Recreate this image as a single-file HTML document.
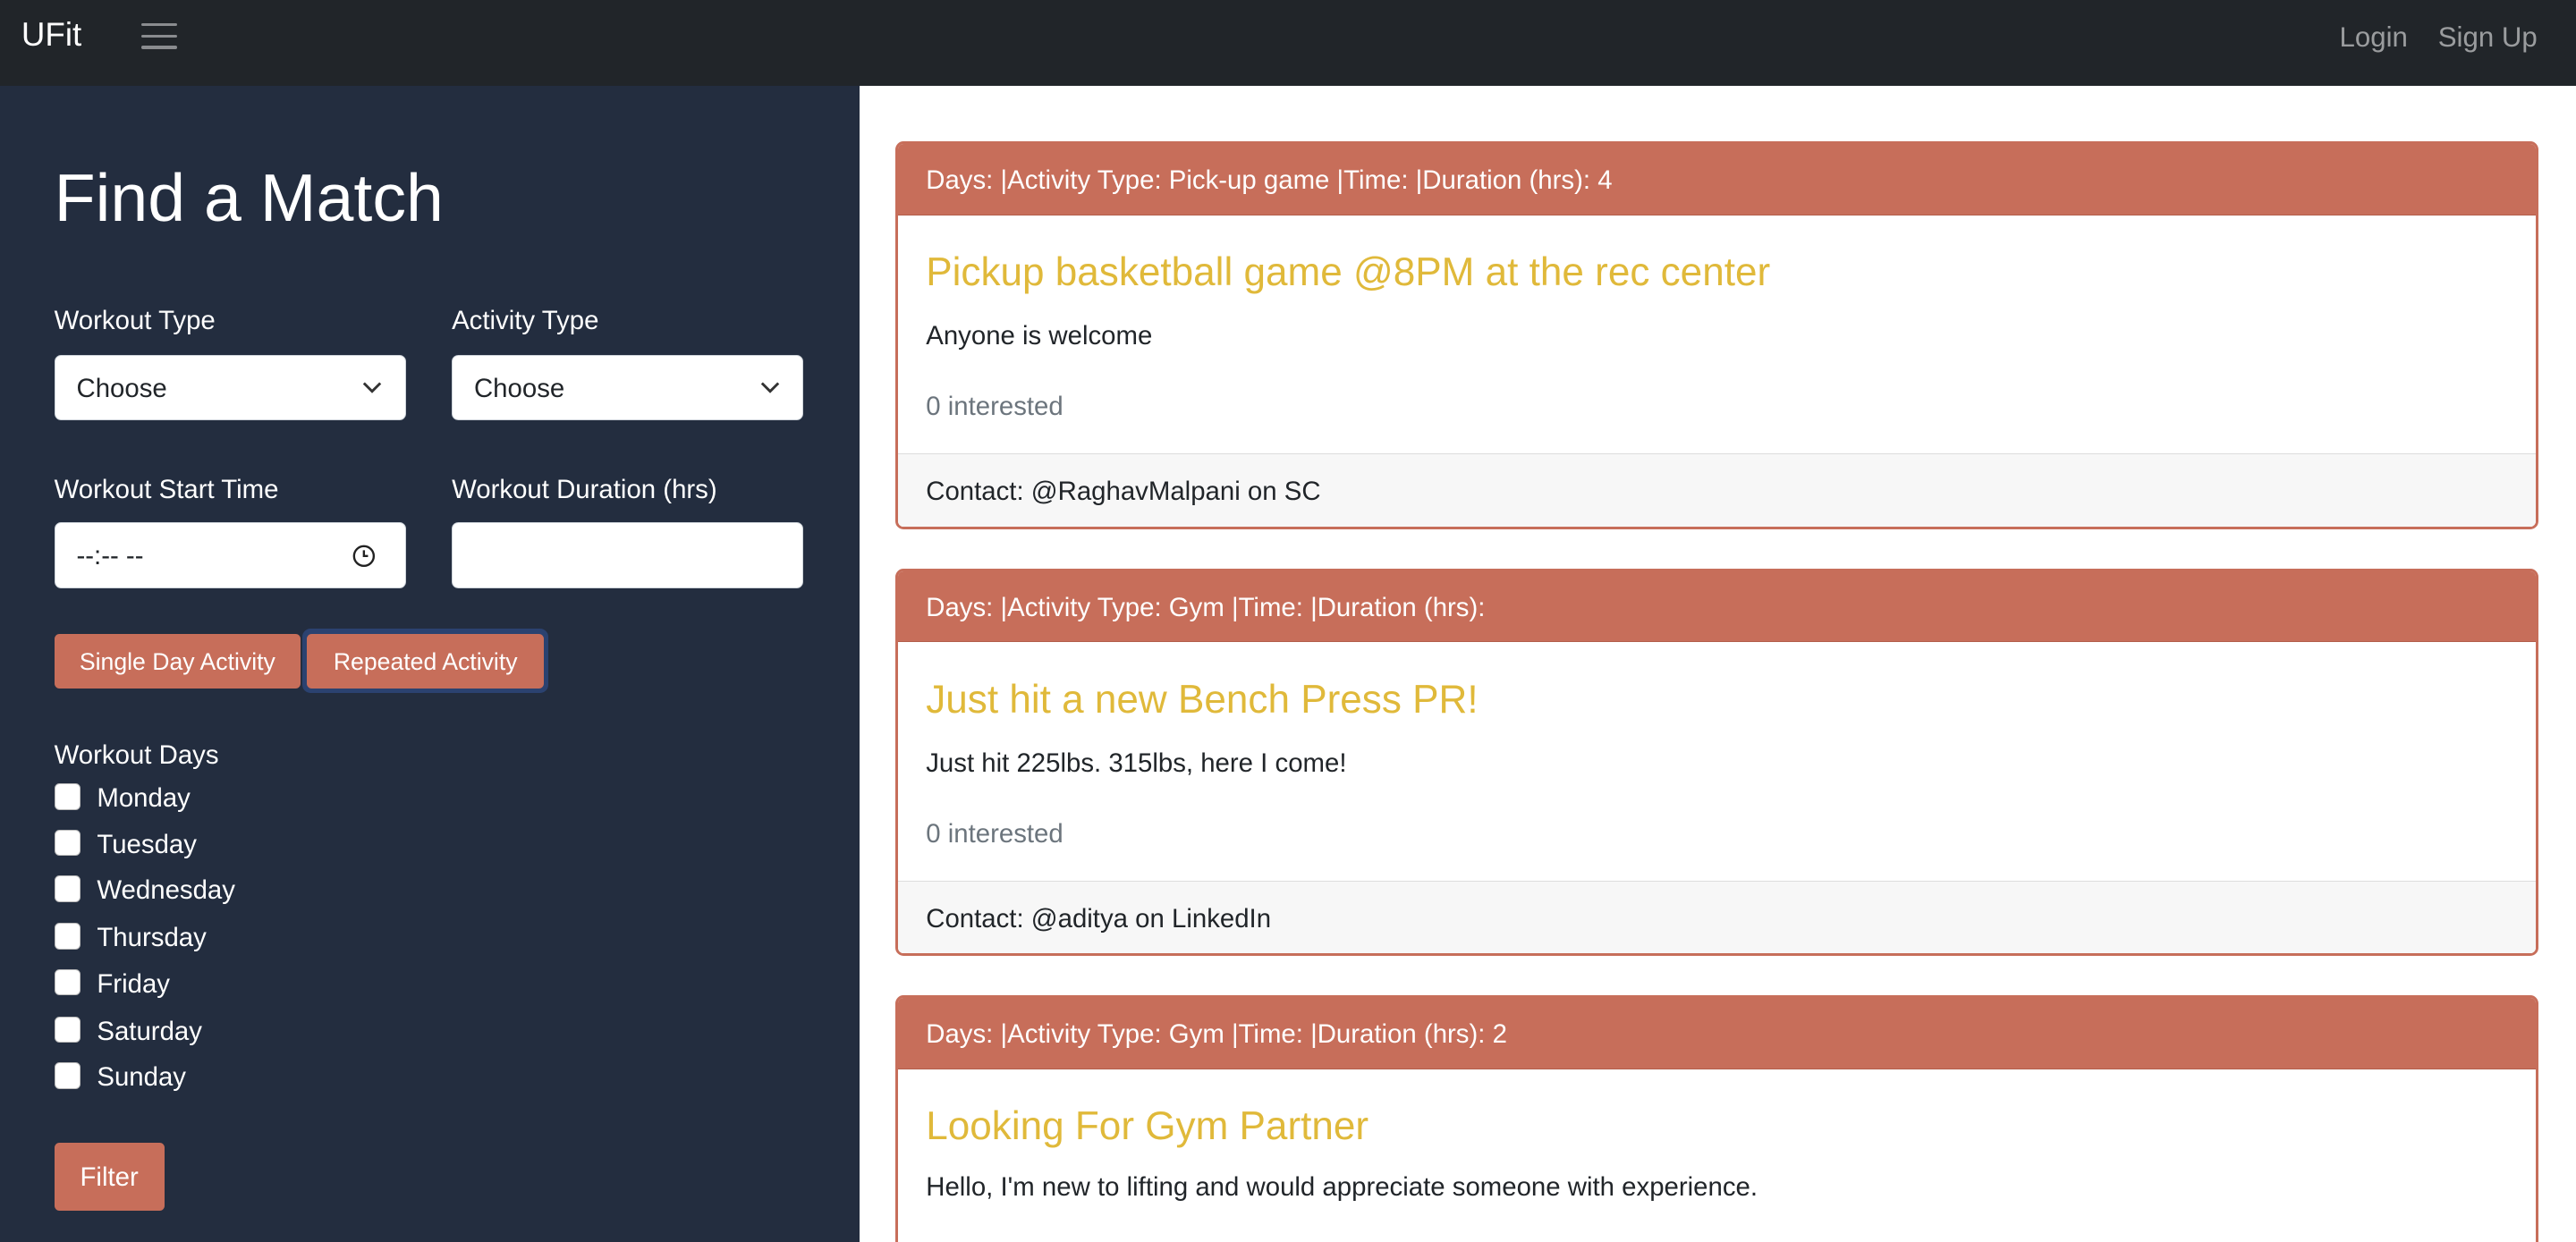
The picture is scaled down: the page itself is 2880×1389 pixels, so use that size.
<!DOCTYPE html>
<html><head><meta charset="utf-8">
<style>
html{zoom:1.83673;overflow:hidden;height:756px}
body{margin:0;width:1568px;height:756px;overflow:hidden;font-family:"Liberation Sans",sans-serif;background:#fff;position:relative}
.nav{position:absolute;left:0;top:0;width:1568px;height:52px;background:#212529}
.brand{position:absolute;left:13px;top:10px;color:#fff;font-size:20px}
.ham{position:absolute;left:86px;top:14px;width:22px}
.ham i{display:block;height:2px;background:#8a8c8f;margin-bottom:5px;border-radius:1px}
.nl{position:absolute;top:13px;color:rgba(255,255,255,.55);font-size:17px}
.side{position:absolute;left:0;top:52px;width:523px;height:704px;background:#232d3f;color:#fff}
.side h1{position:absolute;left:33px;top:45px;margin:0;font-weight:400;font-size:41px}
.lbl{position:absolute;font-size:16px}
.sel{position:absolute;width:213px;height:39px;background:#fff;border:1px solid #ced4da;border-radius:4px;color:#212529;font-size:16px;box-sizing:content-box}
.sel span{position:absolute;left:13px;top:11px}
.btn{position:absolute;background:#c76e5a;color:#fff;border-radius:3px;font-size:14.5px;text-align:center}
.cb{position:absolute;left:33px;width:15px;height:15px;background:#fff;border:1px solid #bbb;border-radius:3px}
.cl{position:absolute;left:59px;font-size:16px}
.card{position:absolute;left:545px;width:997px;border:2px solid #c76e5a;border-radius:5px;overflow:hidden;background:#fff}
.ch{background:#c76e5a;color:#fff;height:43px;font-size:16px;line-height:45px;padding-left:17px;border-bottom:1px solid #b35e4b}
.ct{position:absolute;left:17px;color:#e0b93a;font-size:24px}
.cx{position:absolute;left:17px;color:#212529;font-size:16px}
.ci{position:absolute;left:17px;color:#6c757d;font-size:16px}
.cf{position:absolute;left:0;right:0;bottom:0;height:44px;background:#f7f7f7;border-top:1px solid #ddd;font-size:16px;color:#212529;line-height:46px;padding-left:17px}
</style></head><body>
<div class="nav">
<div class="brand">UFit</div>
<div class="ham"><i></i><i></i><i></i></div>
<div class="nl" style="left:1424px">Login</div>
<div class="nl" style="left:1484px">Sign Up</div>
</div>
<div class="side">
<h1>Find a Match</h1>
<div class="lbl" style="left:33px;top:134px">Workout Type</div>
<div class="lbl" style="left:275px;top:134px">Activity Type</div>
<div class="sel" style="left:33px;top:164px"><span>Choose</span><svg style="position:absolute;right:14px;top:14px" width="12" height="10" viewBox="0 0 12 10"><path d="M1 3l5 5 5-5" fill="none" stroke="#333" stroke-width="1.6"/></svg></div>
<div class="sel" style="left:275px;top:164px"><span>Choose</span><svg style="position:absolute;right:14px;top:14px" width="12" height="10" viewBox="0 0 12 10"><path d="M1 3l5 5 5-5" fill="none" stroke="#333" stroke-width="1.6"/></svg></div>
<div class="lbl" style="left:33px;top:237px">Workout Start Time</div>
<div class="lbl" style="left:275px;top:237px">Workout Duration (hrs)</div>
<div class="sel" style="left:33px;top:266px"><span>--:-- --</span><svg style="position:absolute;right:18px;top:13px" width="14" height="14" viewBox="0 0 14 14"><circle cx="7" cy="7" r="6" fill="none" stroke="#222" stroke-width="1.3"/><path d="M7 3.5V7h2.5" fill="none" stroke="#222" stroke-width="1.3"/></svg></div>
<div class="sel" style="left:275px;top:266px"></div>
<div class="btn" style="left:33px;top:334px;width:150px;height:33px;line-height:34px">Single Day Activity</div>
<div style="position:absolute;left:184px;top:331px;width:150px;height:39px;border-radius:5px;background:#2b4270"></div>
<div class="btn" style="left:187px;top:334px;width:144px;height:33px;line-height:34px">Repeated Activity</div>
<div class="lbl" style="left:33px;top:399px">Workout Days</div>
<div class="cb" style="top:425px"></div><div class="cl" style="top:425px">Monday</div>
<div class="cb" style="top:453px"></div><div class="cl" style="top:453px">Tuesday</div>
<div class="cb" style="top:481px"></div><div class="cl" style="top:481px">Wednesday</div>
<div class="cb" style="top:510px"></div><div class="cl" style="top:510px">Thursday</div>
<div class="cb" style="top:538px"></div><div class="cl" style="top:538px">Friday</div>
<div class="cb" style="top:567px"></div><div class="cl" style="top:567px">Saturday</div>
<div class="cb" style="top:595px"></div><div class="cl" style="top:595px">Sunday</div>
<div class="btn" style="left:33px;top:644px;width:67px;height:41px;line-height:42px;font-size:16px">Filter</div>
</div>
<div class="card" style="top:86px;height:233px">
<div class="ch">Days: |Activity Type: Pick-up game |Time: |Duration (hrs): 4</div>
<div class="ct" style="top:65px">Pickup basketball game @8PM at the rec center</div>
<div class="cx" style="top:108px">Anyone is welcome</div>
<div class="ci" style="top:151px">0 interested</div>
<div class="cf">Contact: @RaghavMalpani on SC</div>
</div>
<div class="card" style="top:346px;height:233px">
<div class="ch">Days: |Activity Type: Gym |Time: |Duration (hrs):</div>
<div class="ct" style="top:65px">Just hit a new Bench Press PR!</div>
<div class="cx" style="top:108px">Just hit 225lbs. 315lbs, here I come!</div>
<div class="ci" style="top:151px">0 interested</div>
<div class="cf">Contact: @aditya on LinkedIn</div>
</div>
<div class="card" style="top:606px;height:160px">
<div class="ch">Days: |Activity Type: Gym |Time: |Duration (hrs): 2</div>
<div class="ct" style="top:65px">Looking For Gym Partner</div>
<div class="cx" style="top:106px">Hello, I'm new to lifting and would appreciate someone with experience.</div>
</div>
</body></html>
